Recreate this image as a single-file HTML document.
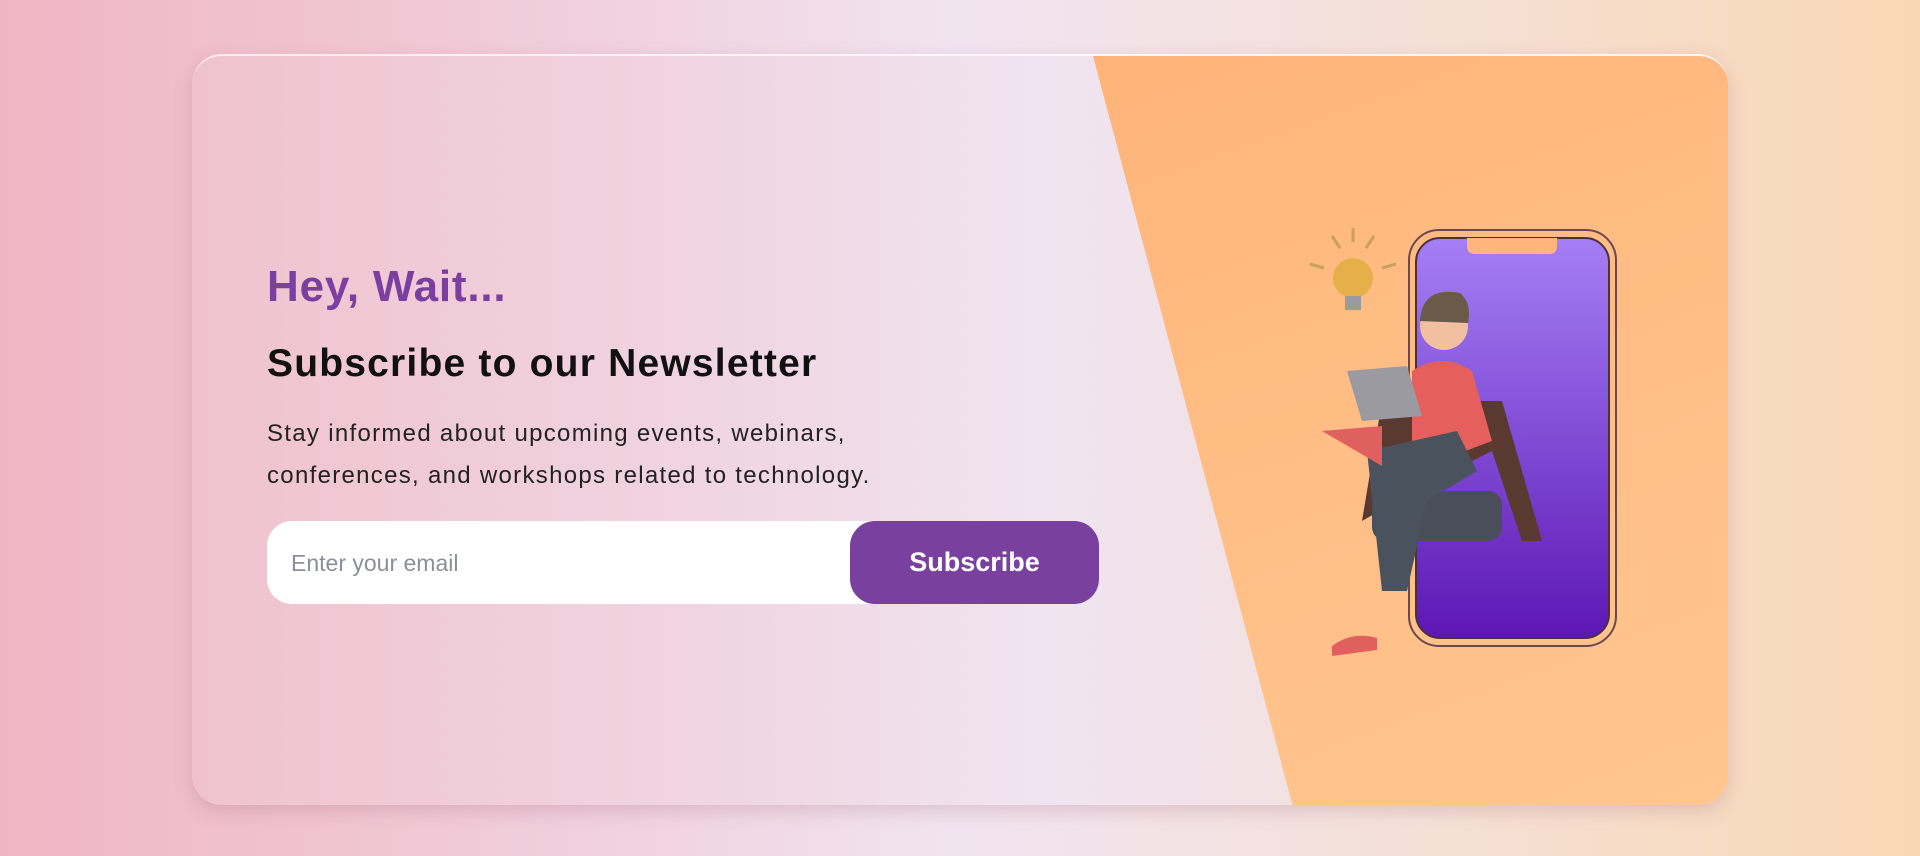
<!DOCTYPE html>
<html><head><meta charset="utf-8"><style>
*{margin:0;padding:0;box-sizing:border-box}
body{width:1920px;height:856px;overflow:hidden;font-family:"Liberation Sans",sans-serif;background:linear-gradient(90deg,#f0b5c3 0%,#f1cfdc 30%,#f1e4f1 50%,#f5e0d6 75%,#f9d7b4 100%);position:relative}
.card{position:absolute;left:192px;top:54px;width:1536px;height:751px;border-radius:30px;overflow:hidden;background:linear-gradient(90deg,#f0c2cf 0%,#f0d6e1 35%,#f0e4f2 55%,#f3e0dc 80%);box-shadow:0 6px 18px rgba(160,100,120,.25);border-top:2px solid rgba(255,255,255,.7)}
.orange{position:absolute;left:0;top:0;width:1536px;height:751px;background:linear-gradient(160deg,#ffab70 0%,#ffbb82 50%,#ffc690 100%);clip-path:polygon(901px 0,1536px 0,1536px 751px,1101px 751px)}
h3{position:absolute;left:75px;top:206px;font-size:44px;color:#7a3fa0;font-weight:bold;letter-spacing:.8px}
h2{position:absolute;left:75px;top:286px;font-size:39px;color:#111;font-weight:bold;letter-spacing:1.2px}
p{position:absolute;left:75px;top:357px;font-size:24px;line-height:42px;color:#222;width:800px;letter-spacing:1.3px}
.form{position:absolute;left:75px;top:465px;width:832px;height:83px;background:#fff;border-radius:25px}
.form span{position:absolute;left:24px;top:29px;font-size:23px;color:#8a8f99}
.btn{position:absolute;left:583px;top:0;width:249px;height:83px;background:#7a40a0;border-radius:25px;color:#fff;font-size:27px;font-weight:bold;text-align:center;line-height:83px}
</style></head><body>
<div class="card">
<div class="orange"></div>
<h3>Hey, Wait...</h3>
<h2>Subscribe to our Newsletter</h2>
<p>Stay informed about upcoming events, webinars,<br>conferences, and workshops related to technology.</p>
<div class="form"><span>Enter your email</span><div class="btn">Subscribe</div></div>
<svg style="position:absolute;left:1050px;top:160px" width="400" height="500" viewBox="0 0 400 500">
<defs><linearGradient id="ph" x1="0" y1="0" x2="0" y2="1"><stop offset="0" stop-color="#a57ff5"/><stop offset="1" stop-color="#5d17b4"/></linearGradient></defs>
<rect x="167" y="14" width="207" height="416" rx="30" fill="none" stroke="#6a4a50" stroke-width="2"/>
<rect x="174" y="22" width="193" height="400" rx="24" fill="url(#ph)" stroke="#4a3040" stroke-width="2"/>
<path d="M225 22 h90 v8 q0 8 -8 8 h-74 q-8 0 -8 -8z" fill="#ffb57c"/>
<g stroke="#c9a060" stroke-width="3"><line x1="90" y1="20" x2="98" y2="32"/><line x1="111" y1="12" x2="111" y2="26"/><line x1="132" y1="20" x2="124" y2="32"/><line x1="68" y1="48" x2="82" y2="52"/><line x1="154" y1="48" x2="140" y2="52"/></g>
<circle cx="111" cy="62" r="20" fill="#e5b04a"/><rect x="103" y="80" width="16" height="14" fill="#9a9aa0"/>
<g transform="translate(-10,-45)">
<path d="M130 350 l20 -120 l120 0 l40 140 l-20 0 l-30 -90 l-60 30 z" fill="#5a3a30"/>
<rect x="140" y="320" width="130" height="50" rx="14" fill="#4a4d5a"/>
<path d="M180 200 q30 -20 60 0 l20 70 l-80 30 z" fill="#e5605c"/>
<circle cx="212" cy="155" r="24" fill="#f0c0a0"/><path d="M188 150 q2 -35 40 -28 q12 10 8 30z" fill="#6a5a4a"/>
<path d="M135 280 l90 -20 l20 40 l-50 30 l-20 90 l-25 0 z" fill="#4a525e"/>
<path d="M100 475 q20 -15 45 -8 l0 12 l-45 6z" fill="#e06060"/>
<path d="M90 260 l60 -5 l0 40 z" fill="#e06060"/>
<path d="M115 200 l60 -5 l15 50 l-60 5 z" fill="#9a9aa0"/>
</g>
</svg>
</div>
</body></html>
